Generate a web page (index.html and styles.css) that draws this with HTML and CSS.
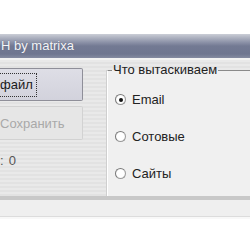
FILE: index.html
```html
<!DOCTYPE html>
<html lang="ru">

<head>
    <meta charset="UTF-8">
    <title>Grabber</title>
    <link rel="stylesheet" href="styles.css">
</head>

<body>
    <div class="window">
        <div class="titlebar">H by matrixa</div>
        <div class="client">
            <div class="left-panel">
                <button class="btn"><span class="focus">файл</span></button>
                <button class="btn" disabled>Сохранить</button>
                <div class="counter"><span>:</span><span>0</span></div>
            </div>
            <fieldset class="group">
                <legend>Что вытаскиваем</legend>
                <label class="option"><input type="radio" name="what" checked> Email</label>
                <label class="option"><input type="radio" name="what"> Сотовые</label>
                <label class="option"><input type="radio" name="what"> Сайты</label>
            </fieldset>
        </div>
        <div class="statusbar"></div>
    </div>
</body>

</html>
```

FILE: styles.css
```css
* {
    margin: 0;
    padding: 0;
    box-sizing: border-box;
}

body {
    font-family: 'Liberation Sans', Arial, sans-serif;
    font-size: 13px;
    background: #fff;
    color: #222;
    width: 250px;
    height: 250px;
    overflow: hidden;
}

.window {
    margin-top: 34px;
    width: 250px;
}

.titlebar {
    height: 24px;
    line-height: 24px;
    padding-left: 1px;
    color: #f4f5f8;
    text-shadow: 0 0 1px #5a6078;
    background: linear-gradient(#cbced7 0, #b3b7c4 3px, #8e94a9 8px, #737a93 12px, #6f7690 20px, #858ba1 24px);
}

.client {
    display: flex;
    height: 142px;
    border-top: 2px solid #f3f3f3;
    border-bottom: 4px solid #c8c8c8;
    background: repeating-linear-gradient(#e9e9e9 0, #e9e9e9 2px, #e2e2e2 2px, #e2e2e2 4px);
}

.left-panel {
    width: 107px;
    padding-top: 8px;
    display: flex;
    flex-direction: column;
    align-items: flex-start;
}

.btn {
    width: 83px;
    height: 33px;
    display: flex;
    align-items: center;
    font: inherit;
    color: #1a1a1a;
    text-align: left;
    border: 1px solid #8f8f99;
    border-left: none;
    border-radius: 0 2px 2px 0;
    background: linear-gradient(#dedee6, #d2d2dc);
    margin-bottom: 5px;
}

.btn .focus {
    display: block;
    height: 24px;
    line-height: 22px;
    padding-right: 3px;
    border: 1px dotted #333;
    border-left: none;
}

.btn:disabled {
    height: 34px;
    color: #a9a9a9;
    border-color: #d2d2d2;
    background: #e6e6e6;
}

.counter {
    display: flex;
    gap: 5px;
    margin-top: 8px;
    color: #555;
    line-height: 15px;
}

.group {
    flex: 1;
    margin-top: 3px;
    padding: 4px 0 0 0;
    background: #f0f0f0;
    border: none;
    border-top: 1px solid #8a8a8a;
    border-left: 1px solid #fff;
    box-shadow: -1px 0 0 #cfcfcf;
}

.group legend {
    margin-left: 4px;
    padding: 0 1px;
    line-height: 14px;
    color: #222;
}

.option {
    display: flex;
    align-items: center;
    gap: 6px;
    height: 37px;
    padding-left: 7px;
    color: #222;
}

.option input {
    appearance: none;
    width: 11px;
    height: 11px;
    border-radius: 50%;
    border: 1px solid #9a9a9a;
    border-top-color: #7a7a7a;
    border-left-color: #7a7a7a;
    background: radial-gradient(#fff 55%, #e2e2e2);
    display: grid;
    place-items: center;
}

.option input:checked::after {
    content: '';
    width: 4px;
    height: 4px;
    border-radius: 50%;
    background: #111;
}

.statusbar {
    height: 17px;
    background: #efefef;
    border-bottom: 1px solid #dcdcdc;
    box-shadow: 0 2px 0 #f8f8f8;
}
```
